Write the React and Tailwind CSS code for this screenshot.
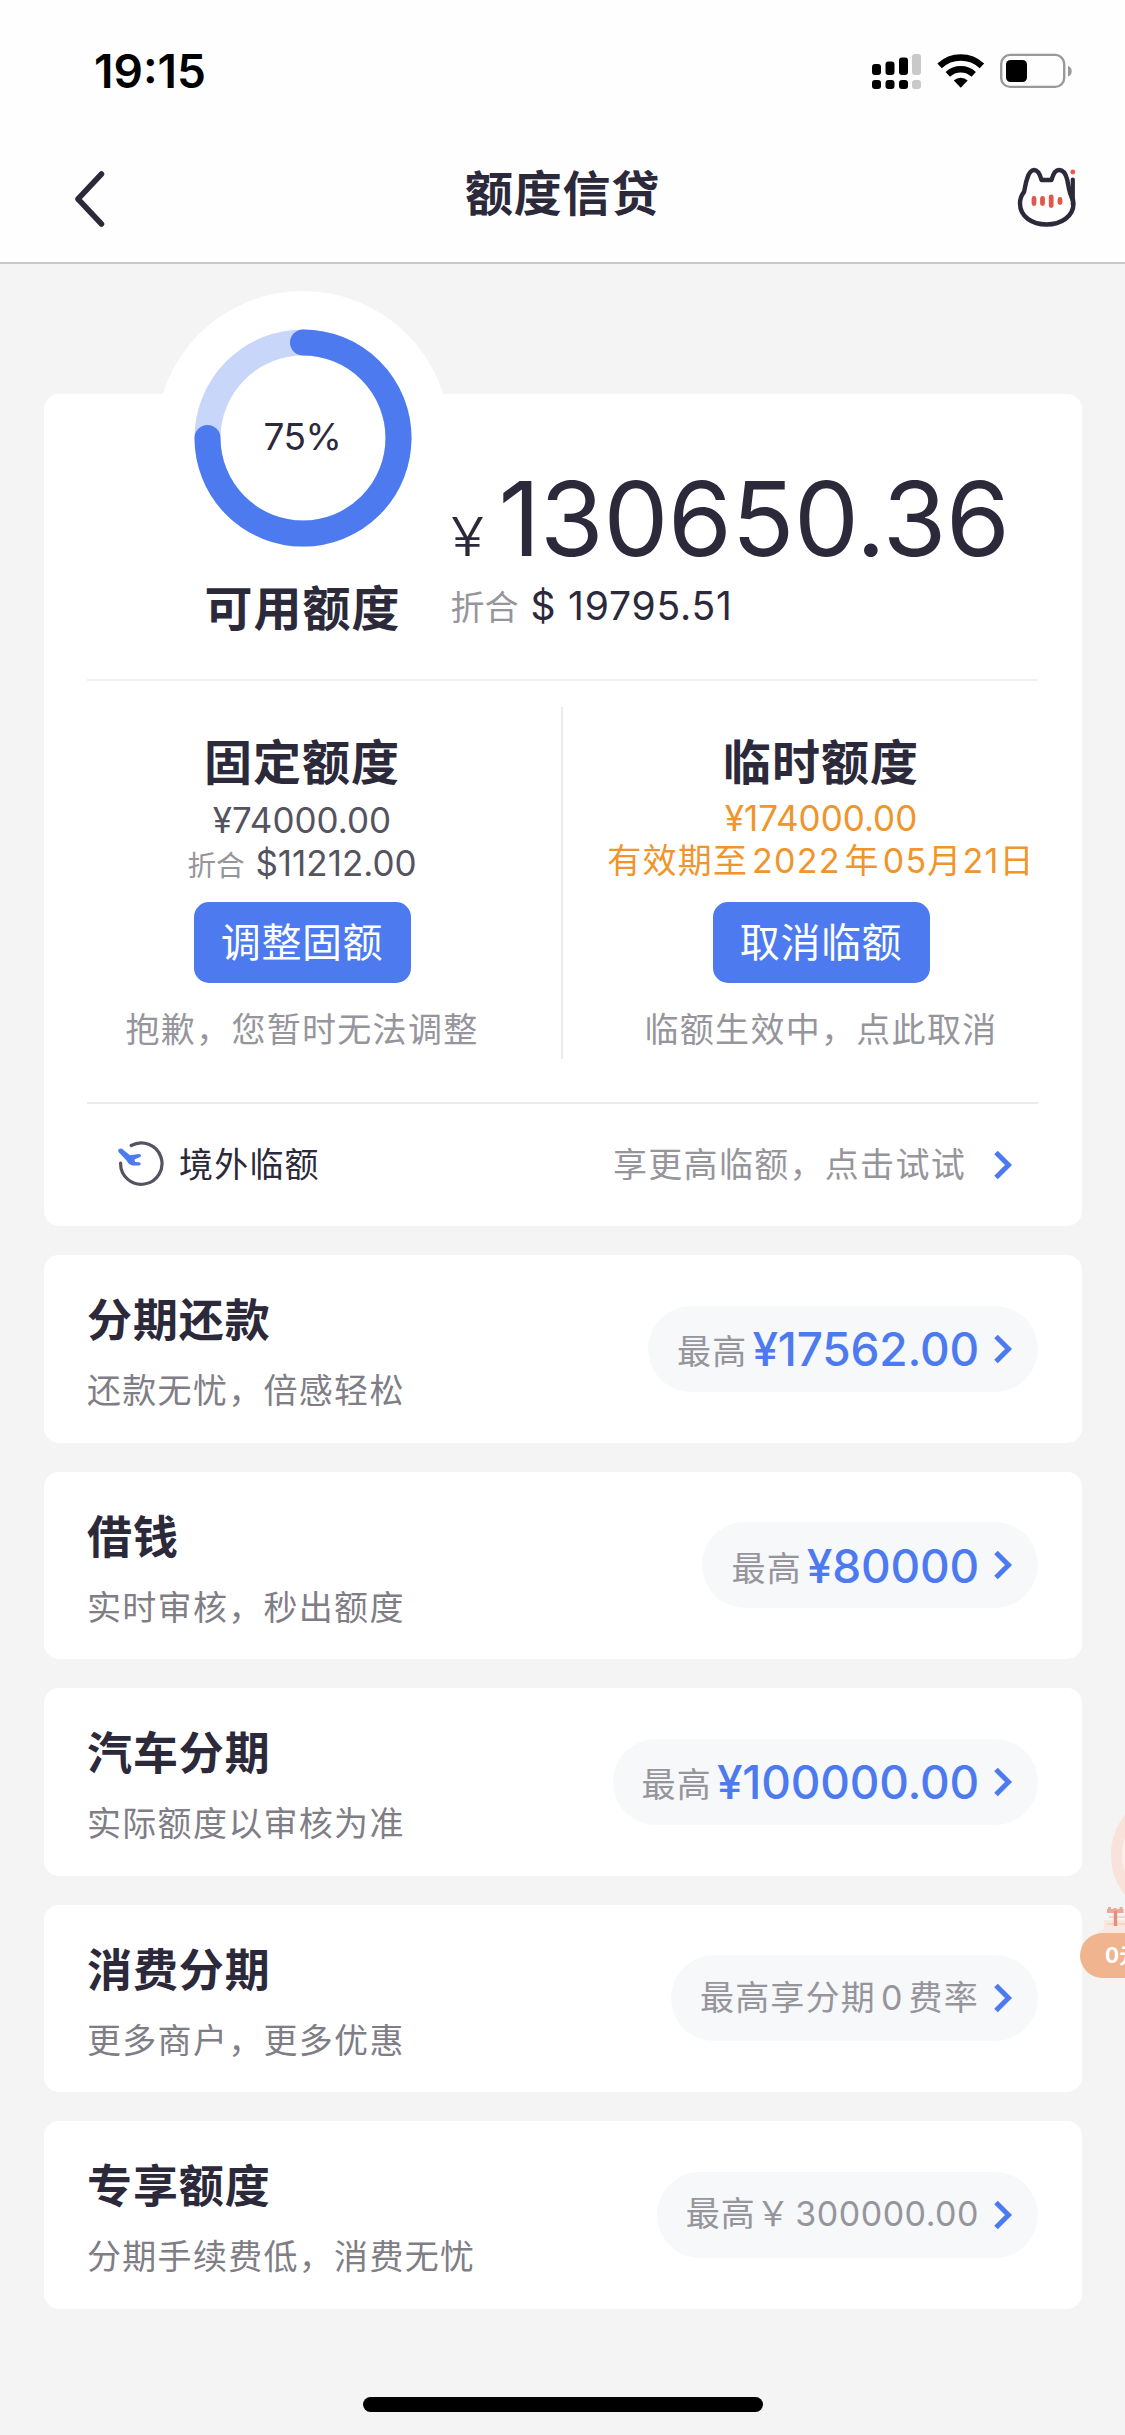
const TEXT = "[font-family:Inter,'Noto_Sans_CJK_SC',sans-serif]";

const products = [
  { title: "分期还款", sub: "还款无忧，倍感轻松", label: "最高", amount: "¥17562.00" },
  { title: "借钱", sub: "实时审核，秒出额度", label: "最高", amount: "¥80000" },
  { title: "汽车分期", sub: "实际额度以审核为准", label: "最高", amount: "¥100000.00" },
  { title: "消费分期", sub: "更多商户，更多优惠", label: <>最高享分期<span className="mx-[5px]">0</span>费率</> },
  { title: "专享额度", sub: "分期手续费低，消费无忧", label: <>最高￥<span className="ml-[4px] tracking-[0.5px]">300000.00</span></> },
];

function Chevron() {
  return (
    <svg className="h-[30px] w-[19px] shrink-0" viewBox="0 0 19 30" fill="none">
      <path d="M2 2.5 L14.5 15 L2 27.5" stroke="#4d7bef" strokeWidth="5" />
    </svg>
  );
}

function Signal() {
  return (
    <svg className="h-[36px] w-[50px]" viewBox="0 0 50 36">
      <rect x="0" y="11" width="9" height="11" rx="3" />
      <rect x="13.5" y="8.5" width="9" height="13.5" rx="3" />
      <rect x="27" y="4.5" width="9" height="17.5" rx="3" />
      <rect x="40" y="1" width="9" height="21" rx="3" fill="#c9c9c9" />
      <rect x="0" y="27" width="9" height="9" rx="3" />
      <rect x="13.5" y="27" width="9" height="9" rx="3" />
      <rect x="27" y="27" width="9" height="9" rx="3" />
      <rect x="40" y="27" width="9" height="9" rx="3" fill="#c9c9c9" />
    </svg>
  );
}

function Wifi() {
  return (
    <svg className="ml-[15px] h-[36px] w-[48px]" viewBox="0 0 48 36" fill="none">
      <path d="M2.6 12.8 A31 31 0 0 1 44.9 12.8" stroke="#000" strokeWidth="6.6" />
      <path d="M10.8 21.4 A19 19 0 0 1 36.7 21.4" stroke="#000" strokeWidth="6.4" />
      <path d="M16.8 27.5 A10.5 10.5 0 0 1 30.7 27.5 L23.75 34.8 Z" fill="#000" />
    </svg>
  );
}

function Battery() {
  return (
    <svg className="ml-[15px] h-[36px] w-[73px]" viewBox="0 0 73 36">
      <rect x="1.2" y="1.9" width="63" height="32" rx="9" fill="none" stroke="#999" strokeWidth="2.4" />
      <rect x="6" y="7" width="21" height="22" rx="4.5" />
      <path d="M68 13 C73 14.5 73 22 68 23.5 Z" fill="#999" />
    </svg>
  );
}

function Cat() {
  return (
    <svg className="h-[64px] w-[60px]" viewBox="0 0 60 64" fill="none">
      <path
        d="M24.5 16 H34.5 C36.5 8.500 39.500 6 42 6 C46.500 6 49 10.500 50.300 16 C51.300 21 52 26 53.500 30 C55.500 33.500 56.500 36 56.500 39.500 C56.500 52.500 44 60.500 29.500 60.500 C15 60.500 3 52.500 3 39.500 C3 35 4.500 31 7 28 C8 24 8.500 19.500 10 15 C12 8.500 14.500 6 17 6 C20 6 22.500 8.500 24.500 16 Z"
        stroke="#2b293a" strokeWidth="4.400" strokeLinejoin="round"
      />
      <path d="M55.800 15.500 V40 M53 28 L55.500 36" stroke="#2b293a" strokeWidth="4.200" strokeLinecap="round" />
      <circle cx="55.800" cy="8" r="2.400" fill="#f0564c" />
      <path d="M17 34.500 V39.500 M25.500 34.500 V39.500 M34.200 33 V41.500 M43 35.500 V38.500" stroke="#e0584a" strokeWidth="4.800" strokeLinecap="round" />
    </svg>
  );
}

function PlaneClock() {
  return (
    <svg className="h-[50px] w-[48px]" viewBox="0 0 48 50" fill="none">
      <path d="M15.2 5.5 A20.700 20.700 0 1 1 4.600 23" stroke="#55535f" strokeWidth="3.200" strokeLinecap="round" />
      <path d="M2.500 9.500 C4 8 6 8.500 7.500 10 L14 15.200 L23 14 C25.500 14.300 25.500 16.500 24 17 L18.500 19.500 L19 22 L23 22.300 C25.500 22.800 25 25.500 23 25.500 H17.500 C14 25.500 12 23 10.500 20.500 L3 12.500 C2 11.500 2 10.500 2.500 9.500 Z" fill="#4d7bef" />
    </svg>
  );
}

function Gauge() {
  return (
    <div className="relative flex h-[294px] w-[294px] items-center justify-center rounded-full bg-white">
      <svg className="absolute inset-0 h-full w-full" viewBox="0 0 294 294" fill="none">
        <circle cx="147" cy="147" r="95.5" stroke="#c8d7f9" strokeWidth="26" />
        <path d="M147 51.5 A95.5 95.5 0 1 1 51.5 147" stroke="#4d7bef" strokeWidth="26" strokeLinecap="round" />
      </svg>
      <span className="relative -top-px text-[37px] leading-none tracking-[-0.5px]">75%</span>
    </div>
  );
}

function Button({ children }) {
  return (
    <button className="block h-[81px] w-[217px] rounded-[15px] bg-[#4d7bef] text-[40px] leading-[78px] tracking-[0.6px] text-white">
      {children}
    </button>
  );
}

export default function App() {
  return (
    <div className={`relative flex h-[2435px] w-[1125px] flex-col overflow-hidden bg-[#f4f4f4] text-[#2b293a] ${TEXT}`}>
      <header className="h-[264px] border-b-2 border-[#c6c8c8] bg-[#fefefe]">
        <div className="flex h-[142px] items-center justify-between pr-[52px] pl-[94px]">
          <span className="text-[46px] leading-none font-semibold text-black">19:15</span>
          <div className="flex items-center">
            <Signal />
            <Wifi />
            <Battery />
          </div>
        </div>
        <div className="grid h-[110px] grid-cols-[1fr_auto_1fr] items-center pr-[48px] pl-[73px]">
          <svg className="mt-[3px] h-[56px] w-[34px]" viewBox="0 0 34 56" fill="none">
            <path d="M28.5 3 L5 28 L28.5 53" stroke="#2b293a" strokeWidth="5.500" strokeLinecap="round" strokeLinejoin="round" />
          </svg>
          <h1 className="-mt-[6px] -ml-[25px] text-[48px] leading-none font-bold tracking-[0.8px]">额度信贷</h1>
          <div className="-mt-[2px] justify-self-end"><Cat /></div>
        </div>
      </header>

      <main className="flex flex-col gap-[29px] px-[43.5px] pt-[130px]">
        <section className="h-[832px] rounded-[15px] bg-white px-[43.5px]">
          <div className="flex h-[287px] border-b-2 border-[#f0f0f0]">
            <div className="-mt-[103.5px] ml-[68.5px] flex w-[294px] flex-col items-center">
              <Gauge />
              <div className="text-[48px] leading-[48px] font-bold tracking-[1px]">可用额度</div>
            </div>
            <div className="flex flex-col pt-[60px] pl-[1px]">
              <div className="flex items-baseline whitespace-nowrap">
                <span className="w-[36px] origin-left scale-x-115 text-[53px] font-light">¥</span>
                <span className="ml-[12px] text-[103px] leading-[130px] tracking-[-0.3px]">130650.36</span>
              </div>
              <div className="-mt-[3px] flex items-baseline gap-[12px] leading-[50px]">
                <span className="text-[34px] text-[#96959c]">折合</span>
                <span className="text-[39px] tracking-[0.8px]">$ 19795.51</span>
              </div>
            </div>
          </div>

          <div className="flex h-[423px] border-b-2 border-[#ebebeb]">
            <div className="flex w-[430px] shrink-0 flex-col items-center pt-[56px]">
              <h2 className="text-[48px] leading-[52px] font-bold tracking-[1px]">固定额度</h2>
              <div className="mt-[9px] text-[35px] leading-[44px] text-[#55535f]">¥74000.00</div>
              <div className="flex h-[42px] items-baseline gap-[11px] text-[35px] leading-[42px] text-[#55535f]">
                <span className="text-[28.5px] text-[#96959c]">折合</span>$11212.00
              </div>
              <div className="mt-[18px]"><Button>调整固额</Button></div>
              <p className="mt-[23px] text-[34px] leading-[48px] tracking-[1.3px] text-[#96959c]">抱歉，您暂时无法调整</p>
            </div>
            <div className="mt-[26px] ml-[44px] h-[352px] w-[2px] shrink-0 bg-[#ebebeb]" />
            <div className="ml-[18px] flex w-[480px] shrink-0 flex-col items-center pt-[56px]">
              <h2 className="text-[48px] leading-[52px] font-bold tracking-[1px]">临时额度</h2>
              <div className="mt-[8px] text-[35px] leading-[43px] text-[#f0952b]">¥174000.00</div>
              <div className="text-[34px] leading-[42px] tracking-[1.2px] whitespace-nowrap text-[#f0952b]">
                有效期至<span className="mx-[4px]">2022</span>年<span className="ml-[3px]">05</span>月21日
              </div>
              <div className="mt-[20px]"><Button>取消临额</Button></div>
              <p className="mt-[23px] text-[34px] leading-[48px] tracking-[1.3px] text-[#96959c]">临额生效中，点此取消</p>
            </div>
          </div>

          <div className="flex h-[121px] items-center pr-[25px] pl-[29px]">
            <PlaneClock />
            <span className="ml-[15px] text-[34px] tracking-[1.2px]">境外临额</span>
            <span className="mr-[28px] ml-auto text-[34px] tracking-[1.3px] text-[#96959c]">享更高临额，点击试试</span>
            <Chevron />
          </div>
        </section>

        {products.map((p) => (
          <section key={p.title} className="flex h-[187.5px] items-center justify-between rounded-[15px] bg-white px-[43.5px]">
            <div className="pt-[11px]">
              <h3 className="text-[45px] leading-[56px] font-bold tracking-[0.9px]">{p.title}</h3>
              <p className="mt-[18px] text-[34px] leading-[48px] tracking-[1.3px] text-[#7f7d86]">{p.sub}</p>
            </div>
            <div className="flex h-[86px] items-center rounded-full bg-[#f6f8fa] pr-[25px] pl-[29px] whitespace-nowrap">
              <span className="flex items-baseline">
                <span className="-translate-y-px text-[34px] tracking-[1.2px] text-[#96959c]">{p.label}</span>
                {p.amount && <span className="ml-[5px] translate-y-px text-[46px] font-medium tracking-[-0.2px] text-[#4d7bef]">{p.amount}</span>}
              </span>
              <span className="ml-[15px]"><Chevron /></span>
            </div>
          </section>
        ))}
      </main>

      <div className="absolute top-[2397px] left-[363px] h-[15px] w-[400px] rounded-full bg-black" />

      <aside className="absolute top-[1791px] right-0 h-[190px] w-[45px] overflow-hidden">
        <div className="absolute top-0 left-[30.5px] h-[128px] w-[128px] rounded-full border-[11px] border-[#f8e2da] bg-[#faf0ec]" />
        <svg className="absolute top-[112px] left-[15px] h-[34px] w-[30px]" viewBox="0 0 30 34" fill="none">
          <path d="M9 17 H30 V34 H0 C2 29 5 27 9 26 Z" fill="#f9e8e0" />
          <path d="M14 14 H30 M12 21 H30" stroke="#f5d5ca" strokeWidth="2" />
          <path d="M12 8 H28.500" stroke="#eba797" strokeWidth="4" />
          <path d="M14.500 4 V9 M20 5 V8 M26 4 V9" stroke="#eba797" strokeWidth="3" />
          <path d="M20.500 8 V23" stroke="#e58e7b" strokeWidth="3.400" />
        </svg>
        <div className="absolute top-[142px] left-0 h-[45px] w-[120px] rounded-full bg-[#f0b58e] pl-[25px] text-[21px] leading-[45px] font-bold whitespace-nowrap text-white">0元</div>
      </aside>
    </div>
  );
}
